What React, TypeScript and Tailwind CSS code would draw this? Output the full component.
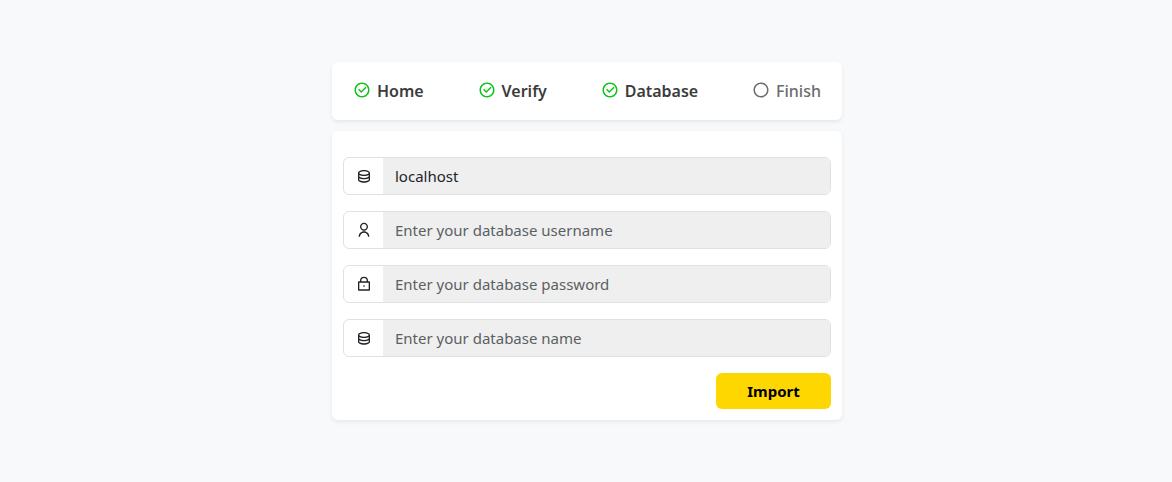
import { useState } from "react";
import type { IconType } from "react-icons";
import {
  RiCheckboxBlankCircleLine,
  RiCheckboxCircleLine,
  RiDatabase2Line,
  RiUserLine,
} from "react-icons/ri";

const steps = [
  { label: "Home", done: true },
  { label: "Verify", done: true },
  { label: "Database", done: true },
  { label: "Finish", done: false },
];

function LockIcon({ className }: { className?: string }) {
  return (
    <svg viewBox="0 0 24 24" fill="currentColor" className={className} aria-hidden="true">
      <path d="M6 8V7a6 6 0 1 1 12 0v1h2a1 1 0 0 1 1 1v12a1 1 0 0 1-1 1H4a1 1 0 0 1-1-1V9a1 1 0 0 1 1-1h2Zm13 2H5v10h14V10Zm-8 3.75h2v2.5h-2v-2.5ZM8 8h8V7a4 4 0 0 0-8 0v1Z" />
    </svg>
  );
}

type Field = {
  id: string;
  label: string;
  icon: IconType | typeof LockIcon;
  type: string;
  initial: string;
};

const fields: Field[] = [
  { id: "host", label: "Enter your database host", icon: RiDatabase2Line, type: "text", initial: "localhost" },
  { id: "username", label: "Enter your database username", icon: RiUserLine, type: "text", initial: "" },
  { id: "password", label: "Enter your database password", icon: LockIcon, type: "password", initial: "" },
  { id: "name", label: "Enter your database name", icon: RiDatabase2Line, type: "text", initial: "" },
];

function Steps() {
  return (
    <ol className="flex items-center justify-between rounded-md bg-white px-[21px] py-4 text-base shadow-[0_2px_4px_rgba(0,0,0,0.075)]">
      {steps.map(({ label, done }) => (
        <li
          key={label}
          className={
            done
              ? "flex items-center gap-1.5 font-semibold text-[#3c3c3c]"
              : "flex items-center gap-1.5 font-medium text-[#6c6c6c]"
          }
        >
          {done ? (
            <RiCheckboxCircleLine className="mb-0.5 size-[18px] text-[#0dc31b]" />
          ) : (
            <RiCheckboxBlankCircleLine className="mb-0.5 size-[18px]" />
          )}
          <span className="leading-[26px]">{label}</span>
        </li>
      ))}
    </ol>
  );
}

function FieldRow({ field }: { field: Field }) {
  const [value, setValue] = useState(field.initial);
  const Icon = field.icon;
  return (
    <div className="flex h-[38px] overflow-hidden rounded-md border border-[#dee2e6]">
      <label htmlFor={field.id} aria-label={field.label} className="flex w-[39px] shrink-0 items-center justify-center text-[#212529]">
        <Icon className="size-4" />
      </label>
      <input
        id={field.id}
        type={field.type}
        value={value}
        placeholder={field.label}
        onChange={(event) => setValue(event.target.value)}
        className="min-w-0 flex-1 bg-[#efefef] px-3 text-[#212529] outline-none placeholder:text-[#5b5f63]"
      />
    </div>
  );
}

export default function App() {
  return (
    <main className="flex min-h-screen flex-col items-center justify-center bg-[#f8f9fb] pl-0.5 font-['Noto_Sans',sans-serif] text-[15px]">
      <div className="flex w-full max-w-[510px] flex-col gap-[11px]">
        <Steps />
        <form
          onSubmit={(event) => event.preventDefault()}
          className="flex flex-col gap-4 rounded-md bg-white px-[11px] pt-[26px] pb-[11px] shadow-[0_2px_4px_rgba(0,0,0,0.075)]"
        >
          {fields.map((field) => (
            <FieldRow key={field.id} field={field} />
          ))}
          <button type="submit" className="h-9 w-[115px] self-end rounded-md bg-[#ffd700] font-bold text-black">
            Import
          </button>
        </form>
      </div>
    </main>
  );
}
